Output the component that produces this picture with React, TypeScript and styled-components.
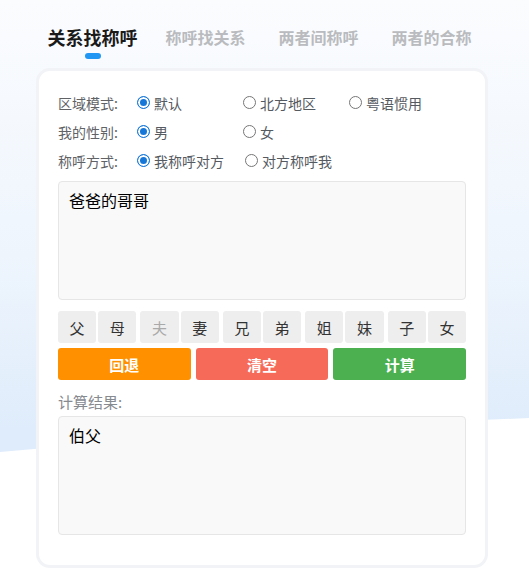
import React, { useState } from 'react'
import type { ReactElement } from 'react'
import styled, { createGlobalStyle } from 'styled-components'

const GlobalStyle = createGlobalStyle`
    html, body {
        margin: 0;
        padding: 0;
    }

    body {
        font-family: "Noto Sans CJK SC", "Noto Sans", sans-serif;
        background: #ffffff;
    }
`

const Page = styled.div`
    position: relative;
    min-height: 571px;
    padding: 0 41px 0 36px;
    box-sizing: border-box;
    background: linear-gradient(180deg, #fbfcfe 0%, #eef5fd 45%, #dfecfb 75%);
    overflow: hidden;

    /* white swell along the bottom */
    &::before {
        content: '';
        position: absolute;
        left: 0;
        right: 0;
        top: 0;
        bottom: 0;
        background: #ffffff;
        clip-path: polygon(0 452px, 30% 438px, 60% 427px, 100% 418px, 100% 100%, 0 100%);
    }
`

const Content = styled.div`
    position: relative;
    width: 452px;
`

const Tabs = styled.div`
    display: grid;
    grid-template-columns: repeat(4, 1fr);
    height: 68px;
    align-items: start;
`

const Tab = styled.div<{ $active?: boolean }>`
    position: relative;
    padding-top: 24px;
    text-align: center;
    font-weight: 700;
    font-size: ${(p) => (p.$active ? '18px' : '16px')};
    line-height: 26px;
    color: ${(p) => (p.$active ? '#1a1a1a' : '#b9bbbe')};
    cursor: pointer;

    &::after {
        content: '';
        display: ${(p) => (p.$active ? 'block' : 'none')};
        width: 16px;
        height: 6px;
        margin: 3px auto 0;
        border-radius: 3px;
        background: #2196f3;
    }
`

const Card = styled.div`
    background: #ffffff;
    border: 3px solid #f1f3f6;
    border-radius: 14px;
    padding: 17px 19px 30px;
`

const OptionRow = styled.div`
    display: flex;
    align-items: center;
    height: 29px;
    font-size: 14px;
    color: #606266;
`

const Label = styled.span`
    width: 79px;
    flex: none;
`

const Option = styled.label<{ $width: number }>`
    display: flex;
    align-items: center;
    width: ${(p) => p.$width}px;
    color: #555a61;
    cursor: pointer;
`

const Dot = styled.span<{ $on: boolean }>`
    width: 13px;
    height: 13px;
    margin-right: 4px;
    border-radius: 50%;
    box-sizing: border-box;
    border: 1px solid ${(p) => (p.$on ? '#1677d9' : '#767676')};
    background: ${(p) => (p.$on ? '#1677d9' : '#ffffff')};
    box-shadow: ${(p) => (p.$on ? 'inset 0 0 0 2px #ffffff' : 'none')};
`

const Box = styled.div<{ $gap: number }>`
    height: 119px;
    margin-top: ${(p) => p.$gap}px;
    padding: 7px 10px;
    box-sizing: border-box;
    background: #f9f9f9;
    border: 1px solid #e6e6e6;
    border-radius: 4px;
    font-size: 16px;
    line-height: 22px;
    color: #000000;
`

const Keys = styled.div`
    display: grid;
    grid-template-columns: repeat(5, 1fr);
    gap: 4px;
    margin-top: 11px;
`

const KeyPair = styled.div`
    display: grid;
    grid-template-columns: 1fr 1fr;
    gap: 2px;
`

const Key = styled.button<{ $off?: boolean }>`
    height: 32px;
    padding: 0;
    border: none;
    border-radius: 3px;
    background: #eeeeee;
    font-family: inherit;
    font-size: 15px;
    color: ${(p) => (p.$off ? '#a9a9a9' : '#333333')};
`

const Actions = styled.div`
    display: grid;
    grid-template-columns: repeat(3, 1fr);
    gap: 5px;
    margin-top: 5px;
`

const Action = styled.button<{ $color: string }>`
    height: 32px;
    border: none;
    border-radius: 3px;
    background: ${(p) => p.$color};
    color: #ffffff;
    font-family: inherit;
    font-size: 15px;
    font-weight: 700;
`

const ResultTitle = styled.div`
    margin-top: 12px;
    font-size: 15px;
    line-height: 20px;
    color: #878a8f;
`

const tabs = ['关系找称呼', '称呼找关系', '两者间称呼', '两者的合称']

const keyPairs = [['父', '母'], ['夫', '妻'], ['兄', '弟'], ['姐', '妹'], ['子', '女']]

const rows = [
    { label: '区域模式:', options: ['默认', '北方地区', '粤语惯用'], widths: [106, 106, 100] },
    { label: '我的性别:', options: ['男', '女'], widths: [106, 100] },
    { label: '称呼方式:', options: ['我称呼对方', '对方称呼我'], widths: [108, 120] },
]

export default function App(): ReactElement {

    const [picked, setPicked] = useState([0, 0, 0])

    return (
        <Page>
            <GlobalStyle />
            <Content>
                <Tabs>
                    {tabs.map((t, i) => (
                        <Tab key={t} $active={i === 0}>{t}</Tab>
                    ))}
                </Tabs>

                <Card>
                    {rows.map((r, ri) => (
                        <OptionRow key={r.label}>
                            <Label>{r.label}</Label>
                            {r.options.map((o, oi) => (
                                <Option
                                    key={o}
                                    $width={r.widths[oi]}
                                    onClick={() => setPicked(picked.map((v, k) => (k === ri ? oi : v)))}
                                >
                                    <Dot $on={picked[ri] === oi} />
                                    {o}
                                </Option>
                            ))}
                        </OptionRow>
                    ))}

                    <Box $gap={6}>爸爸的哥哥</Box>

                    <Keys>
                        {keyPairs.map((pair) => (
                            <KeyPair key={pair[0]}>
                                {pair.map((k) => (
                                    <Key key={k} $off={k === '夫'}>{k}</Key>
                                ))}
                            </KeyPair>
                        ))}
                    </Keys>

                    <Actions>
                        <Action $color="#ff9100">回退</Action>
                        <Action $color="#f56a58">清空</Action>
                        <Action $color="#4caf50">计算</Action>
                    </Actions>

                    <ResultTitle>计算结果:</ResultTitle>
                    <Box $gap={4}>伯父</Box>
                </Card>
            </Content>
        </Page>
    )

}
